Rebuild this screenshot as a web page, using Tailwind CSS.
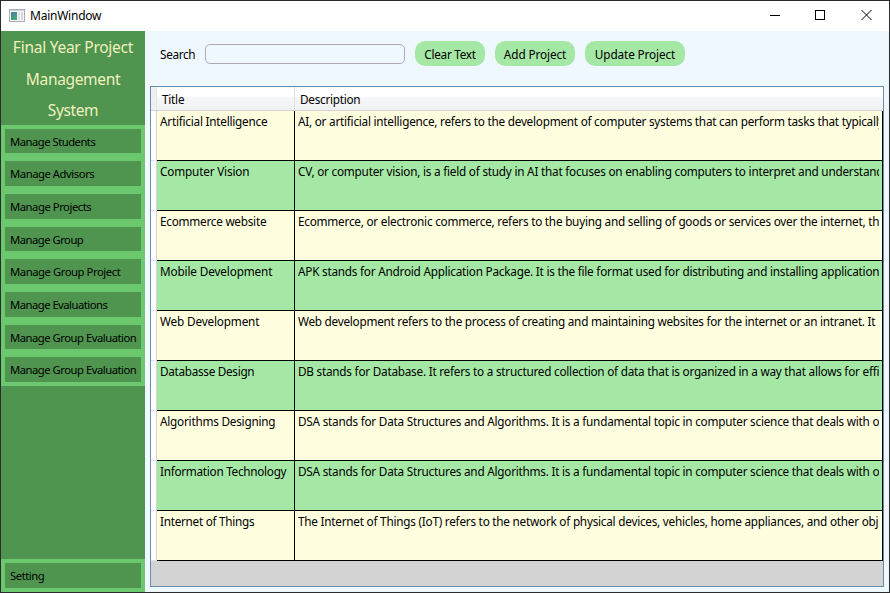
<!DOCTYPE html>
<html lang="en">
<head>
<meta charset="utf-8">
<title>MainWindow</title>
<script src="https://cdn.jsdelivr.net/npm/@tailwindcss/browser@4"></script>
</head>
<body class="w-[890px] h-[593px] overflow-hidden bg-white text-black text-[12px] leading-4 font-['Noto_Sans','Open_Sans',sans-serif]">
<div class="w-[890px] h-[593px] flex flex-col border border-[#2b2a2d] relative overflow-hidden">
  <header class="h-[30px] shrink-0 bg-white flex items-center pl-2">
    <svg width="16" height="14" viewBox="0 0 16 14" class="mr-[5px]" shape-rendering="crispEdges">
      <defs><linearGradient id="pic" x2="0.4" y2="1"><stop stop-color="#4b79b0"/><stop offset="1" stop-color="#4ba573"/></linearGradient></defs>
      <rect x=".5" y=".5" width="15" height="12" fill="#f4f5f5" stroke="#a9adb1"/>
      <rect x="1" y="1" width="14" height="1" fill="#d1d5d8"/>
      <rect x="2" y="3" width="6" height="8" fill="url(#pic)"/>
      <rect x="9" y="3" width="2" height="8" fill="#dde1e3"/><rect x="12" y="3" width="2" height="8" fill="#d3d8da"/>
    </svg>
    <span data-w="71">MainWindow</span>
    <svg class="ml-auto mr-4 mb-[2px]" width="103" height="12" viewBox="0 0 103 12" fill="none" stroke="#000">
      <path d="M0 6.500h10M45.500 1.500h9v9h-9z" shape-rendering="crispEdges"/><path d="M91.500 1l10 10m0-10l-10 10"/>
    </svg>
  </header>
  <div class="flex flex-1 min-h-0">
    <aside class="w-36 shrink-0 bg-[#4f954f] flex flex-col">
      <h1 class="h-[94px] shrink-0 flex flex-col items-center text-[15.5px] leading-[31.5px] text-[#f1f0bd] pt-px font-normal">
        <span data-w="120">Final Year Project</span><span data-w="94">Management</span><span data-w="50">System</span>
      </h1>
      <nav class="h-[261px] shrink-0 bg-[#6bc86e] px-1 pt-1 flex flex-col gap-[8px] text-[11.25px]" id="nav"></nav>
      <div class="mt-auto h-[33px] bg-[#6bc86e] px-1 pt-1 text-[11.25px]"><button class="block w-full h-[25px] bg-[#4f954f] text-left pl-[5px]"><span data-w="34">Setting</span></button></div>
    </aside>
    <main class="flex-1 min-w-0 bg-[#eff7ff] pl-[5px] pr-[5px] flex flex-col">
      <div class="h-[55px] shrink-0 flex items-start pt-[10px] pl-[10px] text-[11.75px]">
        <label class="w-[45px] pt-[5px]"><span data-w="35">Search</span></label>
        <input class="w-[200px] h-5 mt-[3px] rounded-[5px] border border-[#abadb3] mr-[10px] outline-none">
        <button class="w-[70px] h-[25px] rounded-[10px] bg-[#a5e8a5] mr-[10px] pt-px"><span data-w="51">Clear Text</span></button>
        <button class="w-20 h-[25px] rounded-[10px] bg-[#a5e8a5] mr-[10px] pt-px"><span data-w="62">Add Project</span></button>
        <button class="w-[100px] h-[25px] rounded-[10px] bg-[#a5e8a5] pt-px"><span data-w="80">Update Project</span></button>
      </div>
      <section class="w-[734px] h-[501px] border border-[#688caf] bg-[#d3d3d3] text-[11.75px]">
        <div class="h-6 flex border-b border-[#d3d3d6] bg-linear-to-b from-white from-40% via-[#f6f7f8] via-45% to-[#f0f1f3]">
          <div class="w-[6px] bg-[#f0f0f0] border-r border-[#e5e6e8]"></div>
          <div class="w-[138px] border-r border-[#dddee0] pl-[5px] pt-[4px]"><span data-w="22">Title</span></div>
          <div class="pl-[5px] pt-[4px]"><span data-w="60">Description</span></div>
        </div>
        <div id="rows"></div>
      </section>
    </main>
  </div>
  <div class="absolute left-[86px] bottom-[-1px] w-[795px] h-px bg-[#707070]"></div>
</div>
<script>
const menu = [['Manage Students',85,24],['Manage Advisors',84,25],['Manage Projects',81,25],['Manage Group',73,24],['Manage Group Project',110,25],['Manage Evaluations',97,25],['Manage Group Evaluation',126,24],['Manage Group Evaluation',126,25]];
document.getElementById('nav').innerHTML = menu.map(([t,w,h]) => `<button class="block shrink-0 w-full bg-[#4f954f] text-left pl-[5px] pt-px" style="height:${h}px"><span data-w="${w}">${t}</span></button>`).join('');
const rows = [
['Artificial Intelligence',107,'AI, or artificial intelligence, refers to the development of computer systems that can perform tasks that typically',586],
['Computer Vision',89,'CV, or computer vision, is a field of study in AI that focuses on enabling computers to interpret and understand',585],
['Ecommerce website',106,'Ecommerce, or electronic commerce, refers to the buying and selling of goods or services over the internet, th',581],
['Mobile Development',112,'APK stands for Android Application Package. It is the file format used for distributing and installing application',581],
['Web Development',99,'Web development refers to the process of creating and maintaining websites for the internet or an intranet. It',577],
['Databasse Design',94,'DB stands for Database. It refers to a structured collection of data that is organized in a way that allows for effi',581],
['Algorithms Designing',115,'DSA stands for Data Structures and Algorithms. It is a fundamental topic in computer science that deals with o',581],
['Information Technology',126,'DSA stands for Data Structures and Algorithms. It is a fundamental topic in computer science that deals with o',581],
['Internet of Things',94,'The Internet of Things (IoT) refers to the network of physical devices, vehicles, home appliances, and other obj',580]];
document.getElementById('rows').innerHTML = rows.map(([t,w,d,dw],i) => `<div class="h-[50px] flex">
<div class="w-[6px] bg-white border-r border-b border-r-[#d1d1d4] border-b-[#e5e5e7]"></div>
<div class="w-[138px] border-r border-b border-black pl-[3px] pt-[2px] ${i%2?'bg-[#a5e8a5]':'bg-[#ffffe0]'}"><span data-w="${w}">${t}</span></div>
<div class="w-[588px] border-r border-b border-black pl-[3px] pr-[3px] pt-[2px] ${i%2?'bg-[#a5e8a5]':'bg-[#ffffe0]'}"><div class="overflow-hidden"><span data-w="${dw}">${d}</span></div></div></div>`).join('');
// Track each label to its intended width, once styles and fonts are in place.
function fit() {
  document.querySelectorAll('[data-w]').forEach(s => {
    s.style.whiteSpace = 'nowrap';
    s.style.display = 'inline-block';
    s.style.letterSpacing = '0px';
    const natural = s.getBoundingClientRect().width;
    s.style.letterSpacing = ((+s.dataset.w + 0.3 - natural) / s.textContent.length) + 'px';
  });
}
window.addEventListener('load', () => { fit(); requestAnimationFrame(fit); document.fonts.ready.then(fit); });
new ResizeObserver(fit).observe(document.querySelector('aside'));
</script>
</body>
</html>
